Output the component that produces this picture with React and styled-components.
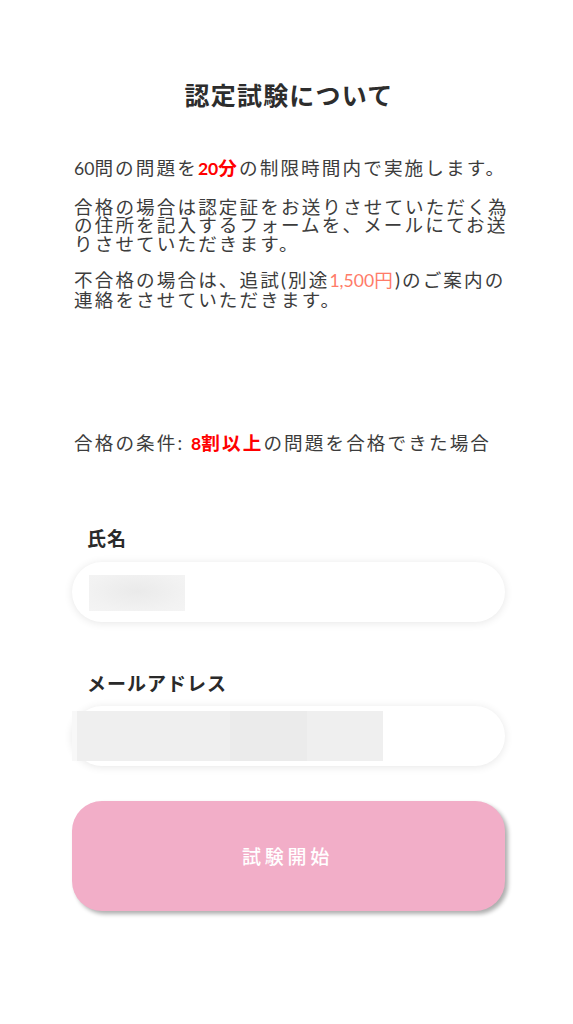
import React from 'react';
import styled, { createGlobalStyle } from 'styled-components';

const fontStack = `Lato, "Noto Sans CJK JP", "Noto Sans", sans-serif`;

const GlobalStyle = createGlobalStyle`
  html, body {
    margin: 0;
    padding: 0;
    background: #ffffff;
  }

  body {
    font-family: ${fontStack};
    color: #3a3a3a;
  }
`;

const Page = styled.main`
  width: 433px;
  margin-left: 72px;
  padding-top: 80px;
  padding-bottom: 100px;
  display: flex;
  flex-direction: column;
`;

const Title = styled.h1`
  margin: 0 0 48.8px;
  padding-left: 1px;
  text-align: center;
  font-size: 25px;
  line-height: 30px;
  font-weight: 700;
  letter-spacing: 1.2px;
  color: #2d2d2d;
`;

const Body = styled.div`
  width: 440px;
  padding-left: 2px;
  font-size: 18.6px;
  line-height: 18.6px;
  letter-spacing: 2.1px;
  color: #3c3c3c;
`;

const Paragraph = styled.p`
  margin: 0 0 ${(p) => p.$gap || 0}px;
`;

const Num = styled.span`
  font-size: 17.6px;
  letter-spacing: 0;
`;

const Em = styled.span`
  color: #ff0000;
  font-weight: 700;
`;

const Price = styled.span`
  color: #ff7b68;
`;

const Condition = styled.p`
  margin: 124px 0 0;
`;

const Label = styled.label`
  display: block;
  margin-top: ${(p) => p.$top}px;
  padding-left: 15px;
  font-size: 19px;
  line-height: 24px;
  font-weight: 700;
  letter-spacing: 1px;
  color: #2a2a2a;
`;

const Field = styled.div`
  margin-top: ${(p) => p.$top}px;
  height: 60px;
  border-radius: 30px;
  background: #ffffff;
  box-shadow: 0 1px 8px rgba(0, 0, 0, 0.1);
  display: flex;
  align-items: center;
  padding-left: ${(p) => p.$inset}px;
`;

const Redact = styled.div`
  display: flex;
  height: ${(p) => p.$h}px;
  margin-top: ${(p) => p.$shift || 0}px;
`;

const Blot = styled.div`
  width: ${(p) => p.$w}px;
  height: 100%;
  background: ${(p) => p.$tone};
`;

const StartButton = styled.button`
  margin-top: 35px;
  width: 433px;
  height: 110px;
  border: none;
  border-radius: 30px;
  background: #f2aec8;
  box-shadow: 3px 3px 4px rgba(0, 0, 0, 0.32);
  color: #ffffff;
  font-family: ${fontStack};
  font-size: 19px;
  font-weight: 500;
  letter-spacing: 3.8px;
  padding-left: 4px;
  cursor: pointer;
`;

export default function App() {
  return (
    <>
      <GlobalStyle />
      <Page>
        <Title>認定試験について</Title>
        <Body>
          <Paragraph $gap={19.4}>
            <Num>60</Num>問の問題を<Em><Num>20</Num>分</Em>の制限時間内で実施します。
          </Paragraph>
          <Paragraph $gap={17.8}>
            合格の場合は認定証をお送りさせていただく為の住所を記入するフォームを、メールにてお送りさせていただきます。
          </Paragraph>
          <Paragraph>
            不合格の場合は、追試(別途<Price><Num>1,500</Num>円</Price>)のご案内の連絡をさせていただきます。
          </Paragraph>
          <Condition>
            合格の条件: <Em><Num>8</Num>割以上</Em>の問題を合格できた場合
          </Condition>
        </Body>

        <Label $top={74.3}>氏名</Label>
        <Field $top={10.5} $inset={17}>
          <Redact $h={36} $shift={2}>
            <Blot
              $w={96}
              $tone="radial-gradient(ellipse at 50% 45%, #eaeaea 0%, #f2f2f2 70%, #f4f4f4 100%)"
            />
          </Redact>
        </Field>

        <Label $top={50.5}>メールアドレス</Label>
        <Field $top={9.5} $inset={0}>
          <Redact $h={50}>
            <Blot $w={5} $tone="#f8f8f8" />
            <Blot $w={153} $tone="#efefef" />
            <Blot $w={77} $tone="#ebebeb" />
            <Blot $w={76} $tone="#efefef" />
          </Redact>
        </Field>

        <StartButton type="button">試験開始</StartButton>
      </Page>
    </>
  );
}
